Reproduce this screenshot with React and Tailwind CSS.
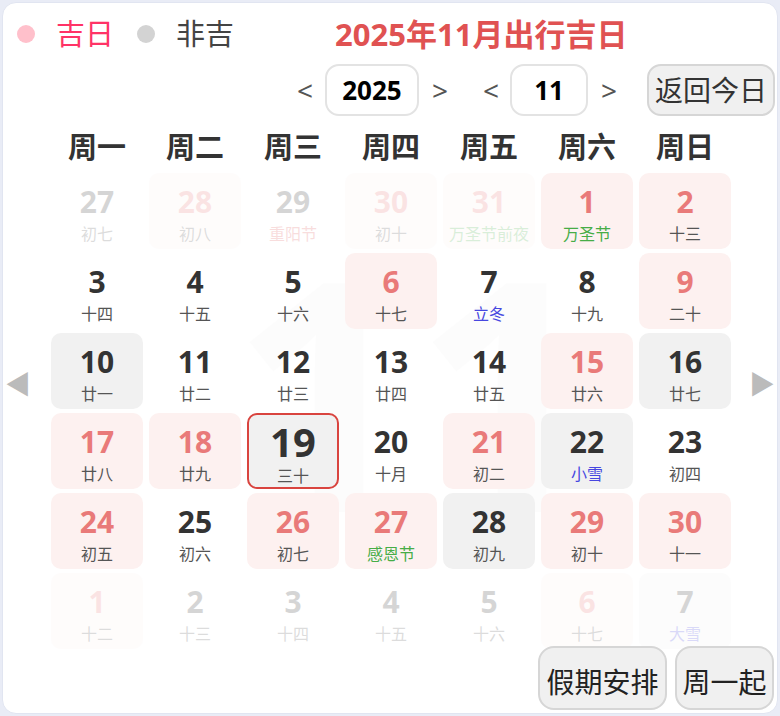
const days = [
  { d: 27, l: '初七', o: true },
  { d: 28, l: '初八', o: true, t: 'good' },
  { d: 29, l: '重阳节', o: true, c: 'red' },
  { d: 30, l: '初十', o: true, t: 'good' },
  { d: 31, l: '万圣节前夜', o: true, t: 'good', c: 'green' },
  { d: 1, l: '万圣节', t: 'good', c: 'green' },
  { d: 2, l: '十三', t: 'good' },
  { d: 3, l: '十四' },
  { d: 4, l: '十五' },
  { d: 5, l: '十六' },
  { d: 6, l: '十七', t: 'good' },
  { d: 7, l: '立冬', c: 'blue' },
  { d: 8, l: '十九' },
  { d: 9, l: '二十', t: 'good' },
  { d: 10, l: '廿一', t: 'gray' },
  { d: 11, l: '廿二' },
  { d: 12, l: '廿三' },
  { d: 13, l: '廿四' },
  { d: 14, l: '廿五' },
  { d: 15, l: '廿六', t: 'good' },
  { d: 16, l: '廿七', t: 'gray' },
  { d: 17, l: '廿八', t: 'good' },
  { d: 18, l: '廿九', t: 'good' },
  { d: 19, l: '三十', today: true },
  { d: 20, l: '十月' },
  { d: 21, l: '初二', t: 'good' },
  { d: 22, l: '小雪', t: 'gray', c: 'blue' },
  { d: 23, l: '初四' },
  { d: 24, l: '初五', t: 'good' },
  { d: 25, l: '初六' },
  { d: 26, l: '初七', t: 'good' },
  { d: 27, l: '感恩节', t: 'good', c: 'green' },
  { d: 28, l: '初九', t: 'gray' },
  { d: 29, l: '初十', t: 'good' },
  { d: 30, l: '十一', t: 'good' },
  { d: 1, l: '十二', o: true, t: 'good' },
  { d: 2, l: '十三', o: true },
  { d: 3, l: '十四', o: true },
  { d: 4, l: '十五', o: true },
  { d: 5, l: '十六', o: true },
  { d: 6, l: '十七', o: true, t: 'good' },
  { d: 7, l: '大雪', o: true, t: 'gray', c: 'blue' },
];

const weekdays = ['周一', '周二', '周三', '周四', '周五', '周六', '周日'];

const font = { fontFamily: '"Noto Sans", "Noto Sans CJK SC", sans-serif' };

function DayCell({ day }) {
  const bg = day.today
    ? 'bg-[#f1f1f1] border-2 border-[#d9443f]'
    : day.t === 'good'
    ? 'bg-[#fdf1f0]'
    : day.t === 'gray'
    ? 'bg-[#f1f1f1]'
    : '';
  const num = day.t === 'good' ? 'text-[#e97a79]' : 'text-[#333]';
  const lunar =
    day.c === 'green'
      ? 'text-[#47ad47]'
      : day.c === 'blue'
      ? 'text-[#4747e0]'
      : day.c === 'red'
      ? 'text-[#e05a5a]'
      : 'text-[#555]';

  return (
    <div className={`h-[76px] rounded-[10px] flex flex-col items-center ${bg} ${day.o ? 'opacity-20' : ''}`}>
      <div
        className={`font-bold ${num} ${day.today ? 'text-[40px] leading-[40px] mt-[7px]' : 'text-[30px] leading-[34px] mt-[12px]'}`}
      >
        {day.d}
      </div>
      <div className={`text-[16px] leading-[20px] ${lunar} ${day.today ? 'mt-[4px]' : 'mt-[5px]'}`}>{day.l}</div>
    </div>
  );
}

function Arrow({ children, className = '' }) {
  return <span className={`inline-block w-[14px] text-center text-[28px] leading-none ${className}`}>{children}</span>;
}

export default function App() {
  return (
    <div className="w-[780px] h-[716px] bg-[#e9ecf6] p-[2px]" style={font}>
      <div className="relative h-full bg-white rounded-[14px] border border-[#e1e5f1] overflow-hidden">
        <div className="absolute left-[228px] top-[225px] text-[320px] leading-none font-bold text-[#000] opacity-[0.008] select-none">
          11
        </div>

        <div className="relative flex items-center h-[62px] pl-[14px]">
          <span className="w-[18px] h-[18px] rounded-full bg-[#ffc0cb]" />
          <span className="ml-[21px] text-[29px] text-[#ff3366]">吉日</span>
          <span className="ml-[23px] w-[18px] h-[18px] rounded-full bg-[#d3d3d3]" />
          <span className="ml-[21px] text-[29px] text-[#444]">非吉</span>
          <span className="ml-[101px] text-[31px] font-bold text-[#e05252]">2025年11月出行吉日</span>
        </div>

        <div className="relative flex items-center justify-end pr-[2px] mt-[-1px] h-[52px] text-[#555]">
          <Arrow className="mr-[14px]">&lt;</Arrow>
          <div className="w-[94px] h-[52px] rounded-[14px] border-2 border-[#e3e3e3] flex items-center justify-center text-[26px] font-bold text-black">
            2025
          </div>
          <Arrow className="ml-[13px]">&gt;</Arrow>
          <Arrow className="ml-[37px] mr-[13px]">&lt;</Arrow>
          <div className="w-[78px] h-[52px] rounded-[14px] border-2 border-[#e3e3e3] flex items-center justify-center text-[26px] font-bold text-black">
            11
          </div>
          <Arrow className="ml-[13px]">&gt;</Arrow>
          <button className="ml-[32px] w-[128px] h-[52px] rounded-[14px] border-2 border-[#d6d6d6] bg-[#f0f0f0] text-[28px] text-[#333]">
            返回今日
          </button>
        </div>

        <div className="relative flex">
          <div className="w-[48px] flex items-center pl-[2px] pt-[4px]">
            <span className="text-[#bbb] text-[26px]">◀</span>
          </div>
          <div className="w-[680px]">
            <div className="grid grid-cols-7 gap-x-[6px] h-[57px] items-center pt-[4px]">
              {weekdays.map((w) => (
                <div key={w} className="text-center text-[29px] font-bold text-[#333]">
                  {w}
                </div>
              ))}
            </div>
            <div className="grid grid-cols-7 gap-x-[6px] gap-y-[4px]">
              {days.map((day, i) => (
                <DayCell key={i} day={day} />
              ))}
            </div>
          </div>
          <div className="flex-1 flex items-center justify-end pr-[2px] pt-[4px]">
            <span className="text-[#bbb] text-[26px]">▶</span>
          </div>
        </div>

        <div className="relative flex justify-end gap-[8px] pr-[3px] mt-[-3px]">
          <button className="w-[129px] h-[64px] rounded-[16px] border-2 border-[#d6d6d6] bg-[#f0f0f0] text-[28px] text-[#222] pt-[8px]">
            假期安排
          </button>
          <button className="w-[99px] h-[64px] rounded-[16px] border-2 border-[#d6d6d6] bg-[#f0f0f0] text-[28px] text-[#222] pt-[8px]">
            周一起
          </button>
        </div>
      </div>
    </div>
  );
}
